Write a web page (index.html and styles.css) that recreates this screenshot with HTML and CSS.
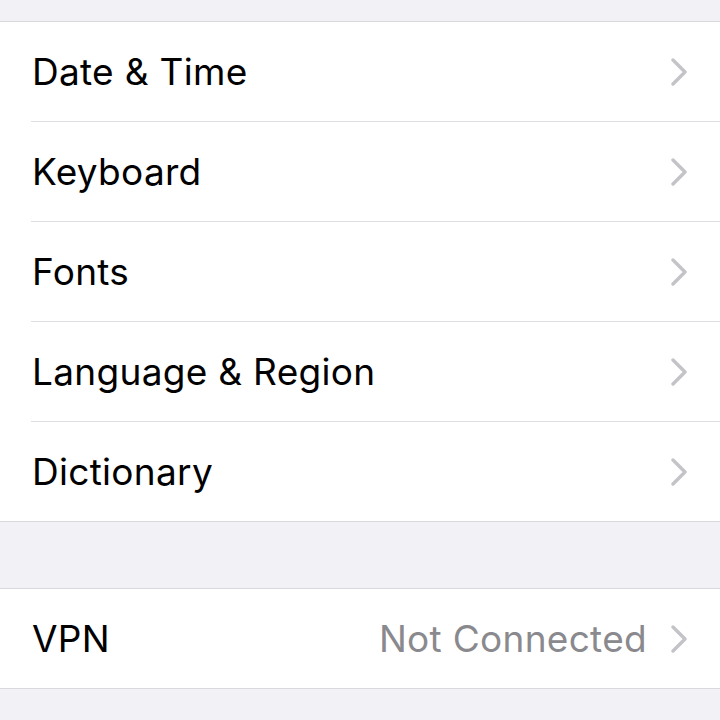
FILE: index.html
```html
<!DOCTYPE html>
<html>
<head>
    <title>General</title>
    <link rel="stylesheet" href="styles.css">
</head>
<body>
    <div class="gap top"></div>

    <div class="group">
        <div class="row"><span class="label">Date &amp; Time</span><span class="chevron"><svg width="16" height="28" viewBox="0 0 16 28"><path d="M2 2 L14 14 L2 26" /></svg></span></div>
        <div class="row"><span class="label">Keyboard</span><span class="chevron"><svg width="16" height="28" viewBox="0 0 16 28"><path d="M2 2 L14 14 L2 26" /></svg></span></div>
        <div class="row"><span class="label">Fonts</span><span class="chevron"><svg width="16" height="28" viewBox="0 0 16 28"><path d="M2 2 L14 14 L2 26" /></svg></span></div>
        <div class="row"><span class="label">Language &amp; Region</span><span class="chevron"><svg width="16" height="28" viewBox="0 0 16 28"><path d="M2 2 L14 14 L2 26" /></svg></span></div>
        <div class="row"><span class="label">Dictionary</span><span class="chevron"><svg width="16" height="28" viewBox="0 0 16 28"><path d="M2 2 L14 14 L2 26" /></svg></span></div>
    </div>

    <div class="gap mid"></div>

    <div class="group">
        <div class="row"><span class="label">VPN</span><span class="value">Not Connected</span><span class="chevron"><svg width="16" height="28" viewBox="0 0 16 28"><path d="M2 2 L14 14 L2 26" /></svg></span></div>
    </div>

    <div class="gap"></div>
</body>
</html>
```

FILE: styles.css
```css
body {
    margin: 0;
    background: #f1f1f6;
    font-family: Inter, "Noto Sans", sans-serif;
    color: #000;
}
.gap {
    height: 40px;
}
.gap.top {
    height: 21px;
}
.gap.mid {
    height: 66px;
}
.group {
    background: white;
    border-top: 1px solid #d9d9dd;
    border-bottom: 1px solid #d9d9dd;
    padding-left: 31px;
}
.row {
    display: flex;
    align-items: center;
    height: 99px;
    padding-right: 33px;
    border-bottom: 1px solid #dedee2;
}
.row:last-child {
    border-bottom: none;
}
.label {
    flex: 1;
    font-size: 37px;
    letter-spacing: 0.3px;
    padding-left: 1px;
}
.value {
    font-size: 37px;
    color: #8a8a8e;
    letter-spacing: 0.3px;
    margin-right: 24px;
}
.chevron {
    display: flex;
}
.chevron path {
    fill: none;
    stroke: #c4c4c8;
    stroke-width: 3.4;
    stroke-linecap: round;
    stroke-linejoin: round;
}
```
